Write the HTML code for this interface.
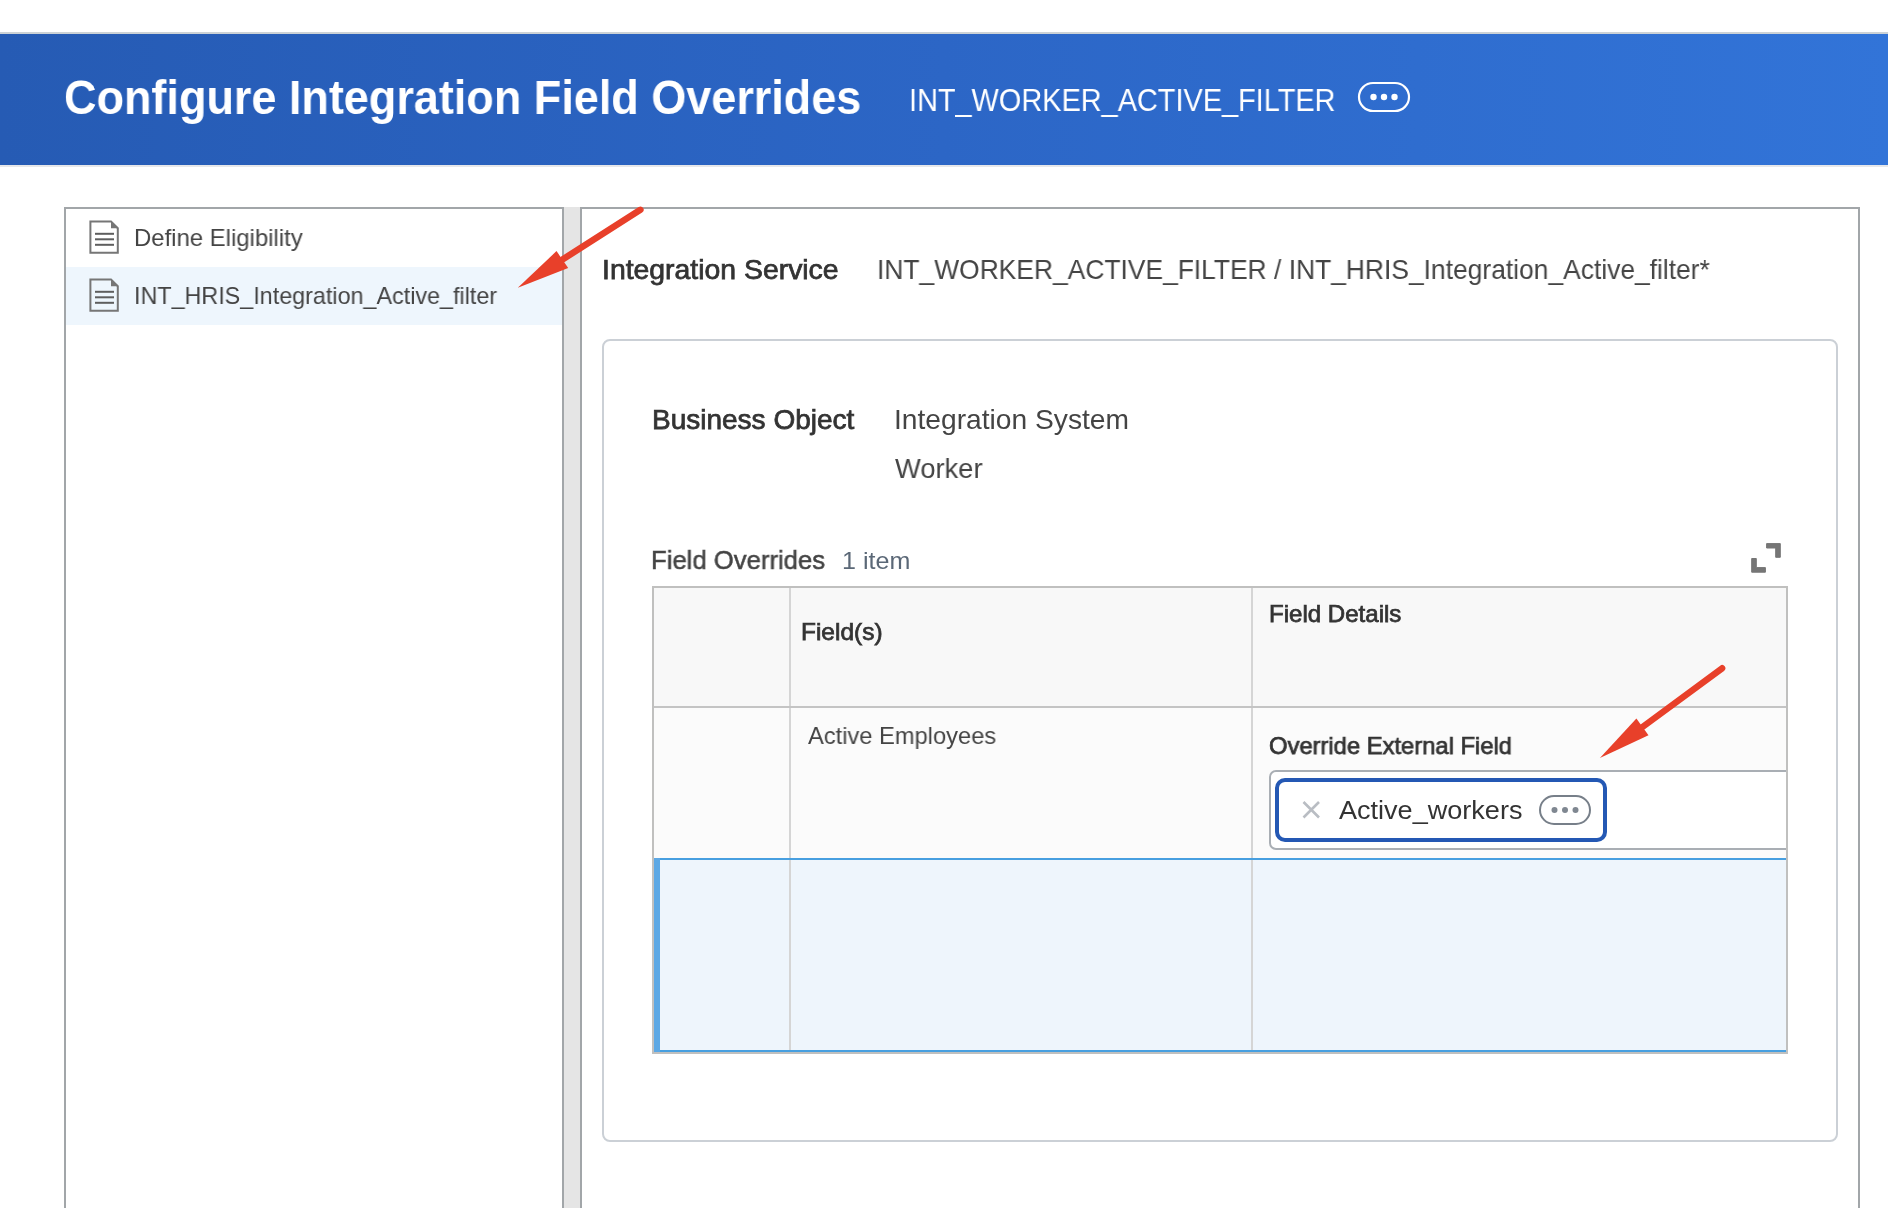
<!DOCTYPE html>
<html><head><meta charset="utf-8">
<style>
html,body{margin:0;padding:0;}
body{width:1888px;height:1208px;position:relative;overflow:hidden;background:#fff;font-family:"Liberation Sans",sans-serif;}
.a{position:absolute;}
.t{position:absolute;white-space:nowrap;line-height:1;transform-origin:0 0;will-change:transform;}
.med{-webkit-text-stroke:0.75px currentColor;}
</style></head><body>
<!-- top header -->
<div class="a" style="left:0;top:32px;width:1888px;height:2px;background:#ccd2d6"></div>
<div class="a" style="left:0;top:34px;width:1888px;height:131px;background:linear-gradient(90deg,#265bb4 0%,#2c66c6 50%,#3274d8 100%)"></div>
<div class="a" style="left:0;top:165px;width:1888px;height:2px;background:#e6e7ea"></div>

<div class="t" id="title" style="left:63.89px;top:74px;font-size:48px;font-weight:bold;color:#fff;transform:scaleX(0.9371)">Configure Integration Field Overrides</div>
<div class="t" id="sub" style="left:908.59px;top:84px;font-size:32px;color:#fff;transform:scaleX(0.9028)">INT_WORKER_ACTIVE_FILTER</div>
<svg class="a" style="left:1356px;top:80px" width="56" height="34" viewBox="0 0 56 34">
  <rect x="3" y="3" width="50" height="28" rx="14" ry="14" fill="none" stroke="#fff" stroke-width="2.2"/>
  <circle cx="17.5" cy="17" r="3.2" fill="#fff"/><circle cx="28" cy="17" r="3.2" fill="#fff"/><circle cx="38.5" cy="17" r="3.2" fill="#fff"/>
</svg>

<!-- left panel -->
<div class="a" style="left:64px;top:207px;width:496px;height:1010px;border:2px solid #a2a6a9;border-bottom:none;background:#fff"></div>
<div class="a" style="left:66px;top:267px;width:496px;height:58px;background:#eef6fd"></div>
<div class="a" style="left:564px;top:207px;width:16px;height:1010px;background:#e5e5e5"></div>

<svg class="a" style="left:88px;top:219px" width="34" height="38" viewBox="0 0 34 38">
  <path d="M2.4 2.4 H23 L29.8 9.2 V33.8 H2.4 Z" fill="none" stroke="#767676" stroke-width="2"/>
  <path d="M23 2.4 V9.2 H29.8 Z" fill="#767676"/>
  <rect x="7" y="13.8" width="19" height="2" fill="#5e5e5e"/><rect x="7" y="19.3" width="19" height="2" fill="#5e5e5e"/><rect x="7" y="24.8" width="19" height="2" fill="#5e5e5e"/>
</svg>
<div class="t" id="define" style="left:133.78px;top:226px;font-size:24px;color:#444;transform:scaleX(0.9956)">Define Eligibility</div>
<svg class="a" style="left:88px;top:277px" width="34" height="38" viewBox="0 0 34 38">
  <path d="M2.4 2.4 H23 L29.8 9.2 V33.8 H2.4 Z" fill="none" stroke="#767676" stroke-width="2"/>
  <path d="M23 2.4 V9.2 H29.8 Z" fill="#767676"/>
  <rect x="7" y="13.8" width="19" height="2" fill="#5e5e5e"/><rect x="7" y="19.3" width="19" height="2" fill="#5e5e5e"/><rect x="7" y="24.8" width="19" height="2" fill="#5e5e5e"/>
</svg>
<div class="t" id="hris" style="left:133.52px;top:284px;font-size:24px;color:#444;transform:scaleX(0.9720)">INT_HRIS_Integration_Active_filter</div>

<!-- right panel -->
<div class="a" style="left:580px;top:207px;width:1276px;height:1010px;border:2px solid #a2a6a9;border-bottom:none;background:#fff"></div>

<div class="t med" id="isvc" style="left:602.01px;top:256px;font-size:28px;color:#333;transform:scaleX(1.0134)">Integration Service</div>
<div class="t" id="ival" style="left:877.25px;top:256px;font-size:28px;color:#444;transform:scaleX(0.9428)">INT_WORKER_ACTIVE_FILTER / INT_HRIS_Integration_Active_filter*</div>

<!-- card -->
<div class="a" style="left:602px;top:339px;width:1232px;height:799px;border:2px solid #cbd0d6;border-radius:8px;background:#fff"></div>

<div class="t med" id="bo" style="left:652.05px;top:406px;font-size:28px;color:#333;transform:scaleX(0.9978)">Business Object</div>
<div class="t" id="isys" style="left:894.04px;top:406px;font-size:28px;color:#444;transform:scaleX(1.0068)">Integration System</div>
<div class="t" id="worker" style="left:895.18px;top:455px;font-size:28px;color:#444;transform:scaleX(0.9753)">Worker</div>

<div class="t" id="fo" style="-webkit-text-stroke:0.5px currentColor;left:651.48px;top:547px;font-size:26px;color:#444;transform:scaleX(0.9878)">Field Overrides</div>
<div class="t" id="item" style="left:841.54px;top:549px;font-size:24px;color:#5b6877;transform:scaleX(1.0445)">1 item</div>

<svg class="a" style="left:1748px;top:540px" width="36" height="36" viewBox="0 0 36 36">
  <path d="M18.6 3.6 H32.3 V17.3 H27.7 V8.0 H18.6 Z" fill="#767676" stroke="#767676" stroke-width="1" stroke-linejoin="round"/>
  <path d="M3.7 18.5 H8.3 V27.6 H17.4 V32.2 H3.7 Z" fill="#767676" stroke="#767676" stroke-width="1" stroke-linejoin="round"/>
</svg>

<!-- table -->
<div class="a" id="tbl" style="left:652px;top:586px;width:1132px;height:464px;border:2px solid #c0c0bf;overflow:hidden;background:#fbfbfb">
  <div class="a" style="left:0;top:0;width:1132px;height:118px;background:#f8f8f8"></div>
  <div class="a" style="left:0;top:118px;width:1132px;height:2px;background:#c4c4c4"></div>
  <div class="a" style="left:0;top:270px;width:1132px;height:194px;background:#eef5fc"></div>
  <div class="a" style="left:0;top:270px;width:1132px;height:2px;background:#479fe0"></div>
  <div class="a" style="left:0;top:462px;width:1132px;height:2px;background:#479fe0"></div>
  <div class="a" style="left:0;top:270px;width:6px;height:194px;background:#5ca8e5"></div>
  <div class="a" style="left:135px;top:0;width:2px;height:118px;background:#d5d5d5"></div>
  <div class="a" style="left:135px;top:120px;width:2px;height:150px;background:#d5d5d5"></div>
  <div class="a" style="left:135px;top:272px;width:2px;height:190px;background:#d5d5d5"></div>
  <div class="a" style="left:597px;top:0;width:2px;height:118px;background:#d5d5d5"></div>
  <div class="a" style="left:597px;top:120px;width:2px;height:150px;background:#d5d5d5"></div>
  <div class="a" style="left:597px;top:272px;width:2px;height:190px;background:#d5d5d5"></div>
  <!-- input (coords relative to table inner origin 654,588) -->
  <div class="a" style="left:615px;top:182px;width:600px;height:76px;border:2px solid #a9aeb4;border-radius:7px;background:#fff;"></div>
</div>

<div class="t med" id="fields" style="left:800.56px;top:620px;font-size:24px;color:#333;transform:scaleX(1.0190)">Field(s)</div>
<div class="t med" id="fdet" style="left:1268.59px;top:602px;font-size:24px;color:#333;transform:scaleX(1.0023)">Field Details</div>
<div class="t" id="actemp" style="left:807.58px;top:724px;font-size:24px;color:#444;transform:scaleX(0.9864)">Active Employees</div>
<div class="t med" id="oef" style="left:1268.56px;top:734px;font-size:24px;color:#333;transform:scaleX(0.9899)">Override External Field</div>

<div class="a" style="left:1275px;top:778px;width:324px;height:56px;border:4px solid #2458b4;border-radius:10px;background:#fff"></div>
<svg class="a" style="left:1300px;top:799px" width="22" height="22" viewBox="0 0 22 22">
  <path d="M3.5 3 L19 18.5 M19 3 L3.5 18.5" stroke="#b9bdc3" stroke-width="2.6"/>
</svg>
<div class="t" id="aw" style="left:1339.07px;top:797px;font-size:26px;color:#333;transform:scaleX(1.0405)">Active_workers</div>
<svg class="a" style="left:1537px;top:793px" width="56" height="34" viewBox="0 0 56 34">
  <rect x="3" y="3" width="50" height="28" rx="14" ry="14" fill="none" stroke="#777f89" stroke-width="2"/>
  <circle cx="17.5" cy="17" r="3" fill="#7f8791"/><circle cx="28" cy="17" r="3" fill="#7f8791"/><circle cx="38.5" cy="17" r="3" fill="#7f8791"/>
</svg>

<!-- arrows -->
<svg class="a" style="left:0;top:0" width="1888" height="1208" viewBox="0 0 1888 1208">
  <g fill="#e8402a" stroke="none">
    <line x1="640.4" y1="209.8" x2="562.5" y2="259.5" stroke="#e8402a" stroke-width="6.5" stroke-linecap="round"/>
    <path d="M517.8 287.8 L556.5 251.1 L568.2 268 Z"/>
    <line x1="1722.1" y1="668.3" x2="1642.5" y2="727" stroke="#e8402a" stroke-width="6.5" stroke-linecap="round"/>
    <path d="M1599.9 757.9 L1636.4 718.5 L1648.5 735.2 Z"/>
  </g>
</svg>
</body></html>
